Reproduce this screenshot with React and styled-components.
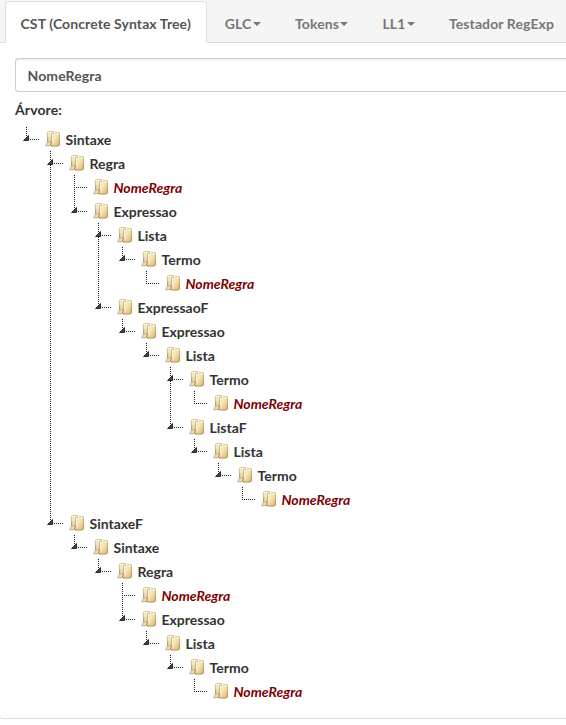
import React from "react";
import styled, { createGlobalStyle, css } from "styled-components";

const GlobalStyle = createGlobalStyle`
  * { box-sizing: border-box; }
  html, body { margin: 0; background: #fff; }
  body {
    overflow: hidden;
    font: bold 14px/20px Lato, "Liberation Sans", sans-serif;
    color: #333;
  }
`;

const Panel = styled.div`
  height: 719px;
  background: #fff;
  border-bottom: 1px solid #ddd;
  border-radius: 0 0 0 4px;
  box-shadow: 0 1px 1px rgba(0, 0, 0, 0.08);
`;

const TabBar = styled.nav`
  display: flex;
  height: 43px;
  padding: 1px 0 0 5px;
  background: #f5f5f5;
  border-bottom: 1px solid #ddd;
`;

const Tab = styled.a`
  display: flex;
  align-items: center;
  height: 42px;
  margin-right: 2px;
  padding: 3px 15px 0;
  border: 1px solid transparent;
  border-radius: 4px 4px 0 0;
  color: #777;
  letter-spacing: 0.1px;
  white-space: nowrap;
  ${({ $active }) =>
    $active &&
    css`
      padding-left: 14.5px;
      color: #555;
      background: #fff;
      border-color: #ddd #ddd #fff;
    `}
`;

const Caret = styled.span`
  width: 0;
  height: 0;
  margin-left: 1.5px;
  border-top: 4px solid;
  border-left: 4px solid transparent;
  border-right: 4px solid transparent;
`;

const Body = styled.main`
  padding: 15px 0 15px 15px;
`;

const Input = styled.div`
  height: 34px;
  padding: 7px 12px 5px 11.5px;
  border: 1px solid #ccc;
  border-right: 0;
  border-radius: 4px 0 0 4px;
  box-shadow: inset 0 1px 1px rgba(0, 0, 0, 0.075);
  color: #555;
  letter-spacing: 0.1px;
`;

const Label = styled.div`
  height: 35px;
  padding-top: 8px;
  letter-spacing: 0.1px;
`;

const Branch = styled.ul`
  list-style: none;
  margin: 0;
  padding: 0 0 0 ${({ $root }) => ($root ? 0 : 24)}px;
`;

const Item = styled.li`
  background: repeating-linear-gradient(#222 0 1px, transparent 1px 2px) 11px 0 /
    1px ${({ $last }) => ($last ? "12px" : "100%")} no-repeat;
`;

const Row = styled.div`
  display: flex;
  align-items: center;
  height: 24px;
`;

const Name = styled.span`
  margin-left: 2.5px;
  padding-top: 1px;
  color: ${({ $leaf }) => ($leaf ? "#800000" : "#333")};
  font-style: ${({ $leaf }) => ($leaf ? "italic" : "normal")};
`;

const Glyph = styled.svg`
  flex: none;
  display: block;
`;

const Joint = ({ open }) => (
  <Glyph width="24" height="24">
    <path
      d={open ? "M15 12.5H24" : "M11 12.5H24"}
      stroke="#222"
      strokeDasharray="1 1"
      shapeRendering="crispEdges"
    />
    {open && <path d="M13.500 8.500v5h-5z" fill="#484848" stroke="#2a2a2a" strokeLinejoin="round" />}
  </Glyph>
);

const Folder = () => (
  <Glyph width="24" height="24">
    <defs>
      <linearGradient id="folderFront" x1="0" y1="0" x2="1" y2="1">
        <stop offset="0" stopColor="#fdf5d8" />
        <stop offset="0.5" stopColor="#f2e0b0" />
        <stop offset="1" stopColor="#d5b570" />
      </linearGradient>
      <linearGradient id="folderBack" x1="0" y1="0" x2="0" y2="1">
        <stop offset="0" stopColor="#faf2d6" />
        <stop offset="1" stopColor="#d8c18a" />
      </linearGradient>
      <linearGradient id="folderEdge" x1="0" y1="0" x2="0" y2="1">
        <stop offset="0" stopColor="#d8c79a" />
        <stop offset="1" stopColor="#b18d4c" />
      </linearGradient>
    </defs>
    <path d="M5.500 18.500l3-4v5h-3z" fill="#b9b5ac" opacity=".5" />
    <path
      d="M8.500 5.500l1-1h5v14h-6z"
      fill="url(#folderBack)"
      stroke="url(#folderEdge)"
    />
    <path d="M7.500 18.500v-2l1.500-2 2.500 1v3z" fill="#efdfb4" stroke="#c4aa74" strokeWidth=".8" />
    <path
      d="M12.500 6.500h2.500l1-1h4.500v12.500l-1 1h-7.500v-3l.500-1z"
      fill="url(#folderFront)"
      stroke="url(#folderEdge)"
    />
    <path d="M13.500 14V7.500h2l1-1h3" fill="none" stroke="#fff8df" />
  </Glyph>
);

const leaf = () => ["NomeRegra"];
const node = (name, ...children) => [name, ...children];

const tree = node(
  "Sintaxe",
  node(
    "Regra",
    leaf(),
    node(
      "Expressao",
      node("Lista", node("Termo", leaf())),
      node(
        "ExpressaoF",
        node(
          "Expressao",
          node(
            "Lista",
            node("Termo", leaf()),
            node("ListaF", node("Lista", node("Termo", leaf())))
          )
        )
      )
    )
  ),
  node(
    "SintaxeF",
    node(
      "Sintaxe",
      node("Regra", leaf(), node("Expressao", node("Lista", node("Termo", leaf()))))
    )
  )
);

function TreeNode({ data, last }) {
  const [name, ...children] = data;
  const isLeaf = children.length === 0;
  return (
    <Item $last={last}>
      <Row>
        <Joint open={!isLeaf} />
        <Folder />
        <Name $leaf={isLeaf}>{name}</Name>
      </Row>
      {!isLeaf && (
        <Branch>
          {children.map((child, i) => (
            <TreeNode key={i} data={child} last={i === children.length - 1} />
          ))}
        </Branch>
      )}
    </Item>
  );
}

const tabs = [
  { label: "CST (Concrete Syntax Tree)", active: true },
  { label: "GLC", menu: true },
  { label: "Tokens", menu: true },
  { label: "LL1", menu: true },
  { label: "Testador RegExp" },
];

export default function App() {
  return (
    <>
      <GlobalStyle />
      <Panel>
        <TabBar>
          {tabs.map((tab) => (
            <Tab key={tab.label} $active={tab.active}>
              {tab.label}
              {tab.menu && <Caret />}
            </Tab>
          ))}
        </TabBar>
        <Body>
          <Input>NomeRegra</Input>
          <Label>Árvore:</Label>
          <Branch $root>
            <TreeNode data={tree} last />
          </Branch>
        </Body>
      </Panel>
    </>
  );
}
